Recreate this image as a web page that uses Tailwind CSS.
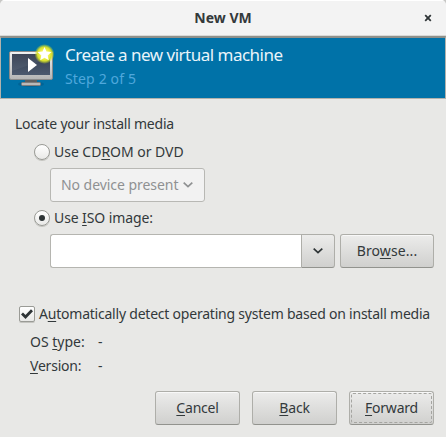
<!DOCTYPE html>
<html lang="en">
<head>
<meta charset="utf-8">
<title>New VM</title>
<script src="https://cdn.jsdelivr.net/npm/@tailwindcss/browser@4"></script>
</head>
<body class="w-[446px] h-[437px] overflow-hidden bg-[#c8c8c6] font-['Noto_Sans',sans-serif] text-[14px] leading-5 tracking-[-0.22px] text-[#33393b]">
<div class="flex h-[437px] w-[446px] flex-col overflow-hidden rounded-t-[5px] bg-[#e8e8e6]">
  <header class="flex h-[36px] shrink-0 items-center border-t border-b border-t-white border-b-[#d9d9d6] bg-[#f3f3f3]">
    <div class="w-[36px]"></div>
    <h1 class="flex-1 text-center text-[14px] font-bold tracking-[0px]">New VM</h1>
    <button class="flex w-[36px] justify-center" aria-label="Close">
      <svg width="8" height="8" viewBox="0 0 8 8" fill="none" stroke="#2e3436" stroke-width="1.800"><path d="M1.2 1.2 6.8 6.8M6.8 1.2 1.2 6.8"/></svg>
    </button>
  </header>

  <section class="flex h-[63px] shrink-0 border border-t-2 border-[#b2b2ac] border-t-[#8f908a] bg-[#0072a8] pl-[7px]">
    <svg class="mt-[6px]" width="48" height="48" viewBox="0 0 48 48">
      <defs>
        <linearGradient id="screen" x1="0" y1="0" x2="0" y2="1"><stop offset="0" stop-color="#343d50"/><stop offset="1" stop-color="#4c596e"/></linearGradient>
        <linearGradient id="frame" x1="0" y1="0" x2="0" y2="1"><stop offset="0" stop-color="#f4f4f4"/><stop offset="1" stop-color="#b4b4b4"/></linearGradient>
        <radialGradient id="glow"><stop offset="0.4" stop-color="#f4f45a"/><stop offset="0.7" stop-color="#d8e02c"/><stop offset="1" stop-color="#c8dc20" stop-opacity="0"/></radialGradient>
      </defs>
      <ellipse cx="23" cy="40" rx="13" ry="3" fill="#00507a" opacity=".4"/>
      <path d="M17 35h12v4H17z" fill="#5d5f61"/>
      <rect x="13.500" y="38.500" width="19" height="3" rx="1" fill="#b9b9b9" stroke="#7c7c7c"/>
      <rect x="1.500" y="7.500" width="43" height="28" rx="1.500" fill="url(#frame)" stroke="#8b8b8b"/>
      <rect x="4" y="10" width="38" height="21" fill="url(#screen)"/>
      <path d="M4 10h38v4L4 27z" fill="#fff" opacity=".05"/>
      <path d="M20 14v14l9-7z" fill="#fff"/>
      <circle cx="36.500" cy="10" r="10" fill="url(#glow)"/>
      <path d="m36.500 3 2 4.600 5 .5-3.800 3.300 1.100 4.900-4.300-2.600-4.300 2.600 1.100-4.900-3.800-3.300 5-.5z" fill="#fff"/>
    </svg>
    <div class="ml-[9px] pt-[5px]">
      <p class="text-[17px] leading-6 tracking-[-0.51px] text-[#e9f4fa]">Create a new virtual machine</p>
      <p class="text-[14px] leading-6 tracking-[0.15px] text-[#4fa8dc]">Step 2 of 5</p>
    </div>
  </section>

  <main class="flex flex-1 flex-col pr-3 pl-[15px] pt-[15px]">
    <p>Locate your install media</p>
    <label class="mt-2 ml-[19px] flex h-5 items-center gap-1">
      <span class="size-4 rounded-full border border-[#9a9b96] bg-linear-to-b from-white to-[#e9e9e7] shadow-[0_1px_0_#c4c4c0]"></span>
      <span class="tracking-[-0.03px]">Use CD<u class="underline-offset-2">R</u>OM or DVD</span>
    </label>
    <div class="mt-[6px] ml-[35px] flex h-[34px] w-[155px] items-center rounded-[3px] border border-[#b8b8b4] bg-[#f2f2f2] pl-[10px] text-[#8f9192]">
      <span class="w-[118px] whitespace-nowrap tracking-[-0.05px]">No device present</span>
      <svg class="ml-1" width="10" height="6" viewBox="0 0 10 6" fill="none" stroke="#8f9192" stroke-width="1.700"><path d="M.7.7 5 4.700 9.300.7"/></svg>
    </div>
    <label class="mt-[6px] ml-[19px] flex h-5 items-center gap-1">
      <span class="flex size-4 items-center justify-center rounded-full border border-[#9a9b96] bg-linear-to-b from-white to-[#e9e9e7] shadow-[0_1px_0_#c4c4c0]"><span class="size-[6px] rounded-full bg-[#2e3436]"></span></span>
      <span class="tracking-[-0.1px]">Use <u class="underline-offset-2">I</u>SO image:</span>
    </label>
    <div class="mt-[6px] ml-[35px] flex h-[34px]">
      <div class="w-[251px] rounded-l-[3px] border border-r-0 border-[#b5b5b0] bg-white"></div>
      <button class="flex w-[34px] items-center justify-center rounded-r-[3px] border border-[#aeaea9] border-b-[#92938e] bg-linear-to-b from-[#ececeb] to-[#d0d0ce]">
        <svg width="10" height="6" viewBox="0 0 10 6" fill="none" stroke="#2e3436" stroke-width="1.700"><path d="M.7.7 5 4.700 9.300.7"/></svg>
      </button>
      <button class="ml-[5px] w-[94px] rounded-[3px] border border-[#aeaea9] border-b-[#92938e] bg-linear-to-b from-[#ececeb] to-[#d0d0ce] tracking-[0.1px] shadow-[inset_0_1px_0_#f8f8f8]">Bro<u class="underline-offset-2">w</u>se...</button>
    </div>
    <label class="mt-[36px] ml-1 flex h-5 items-center gap-1">
      <span class="flex size-4 items-center justify-center rounded-[2px] border border-[#9a9b96] bg-linear-to-b from-white to-[#e9e9e7] shadow-[0_1px_0_#c4c4c0]">
        <svg width="12" height="10" viewBox="0 0 12 10" fill="none" stroke="#2e3436" stroke-width="2.800"><path d="M1 4.500 4.500 8 11 1.200"/></svg>
      </span>
      <span class="whitespace-nowrap">A<u class="underline-offset-2">u</u>tomatically detect operating system based on install media</span>
    </label>
    <dl class="mt-2 ml-[15px] grid grid-cols-[68px_1fr] gap-y-1">
      <dt class="tracking-[0px]">OS <u class="underline-offset-2">t</u>ype:</dt><dd>-</dd>
      <dt><u class="underline-offset-2">V</u>ersion:</dt><dd>-</dd>
    </dl>
    <footer class="mt-[15px] flex h-[34px] justify-end gap-3">
      <button class="mr-0 w-[85px] rounded-[3px] border border-[#aeaea9] border-b-[#92938e] bg-linear-to-b from-[#ececeb] to-[#d0d0ce] shadow-[inset_0_1px_0_#f8f8f8]"><u class="underline-offset-2">C</u>ancel</button>
      <button class="w-[85px] rounded-[3px] border border-[#aeaea9] border-b-[#92938e] bg-linear-to-b from-[#ececeb] to-[#d0d0ce] shadow-[inset_0_1px_0_#f8f8f8]"><u class="underline-offset-2">B</u>ack</button>
      <button class="w-[85px] rounded-[3px] border border-[#aeaea9] border-b-[#92938e] bg-linear-to-b from-[#ececeb] to-[#d0d0ce] p-px shadow-[inset_0_1px_0_#f8f8f8]"><span class="flex h-[30px] items-center justify-center rounded-[2px] border border-dashed border-[#a5a5a1]"><span><u class="underline-offset-2">F</u>orward</span></span></button>
    </footer>
  </main>
</div>
</body>
</html>
